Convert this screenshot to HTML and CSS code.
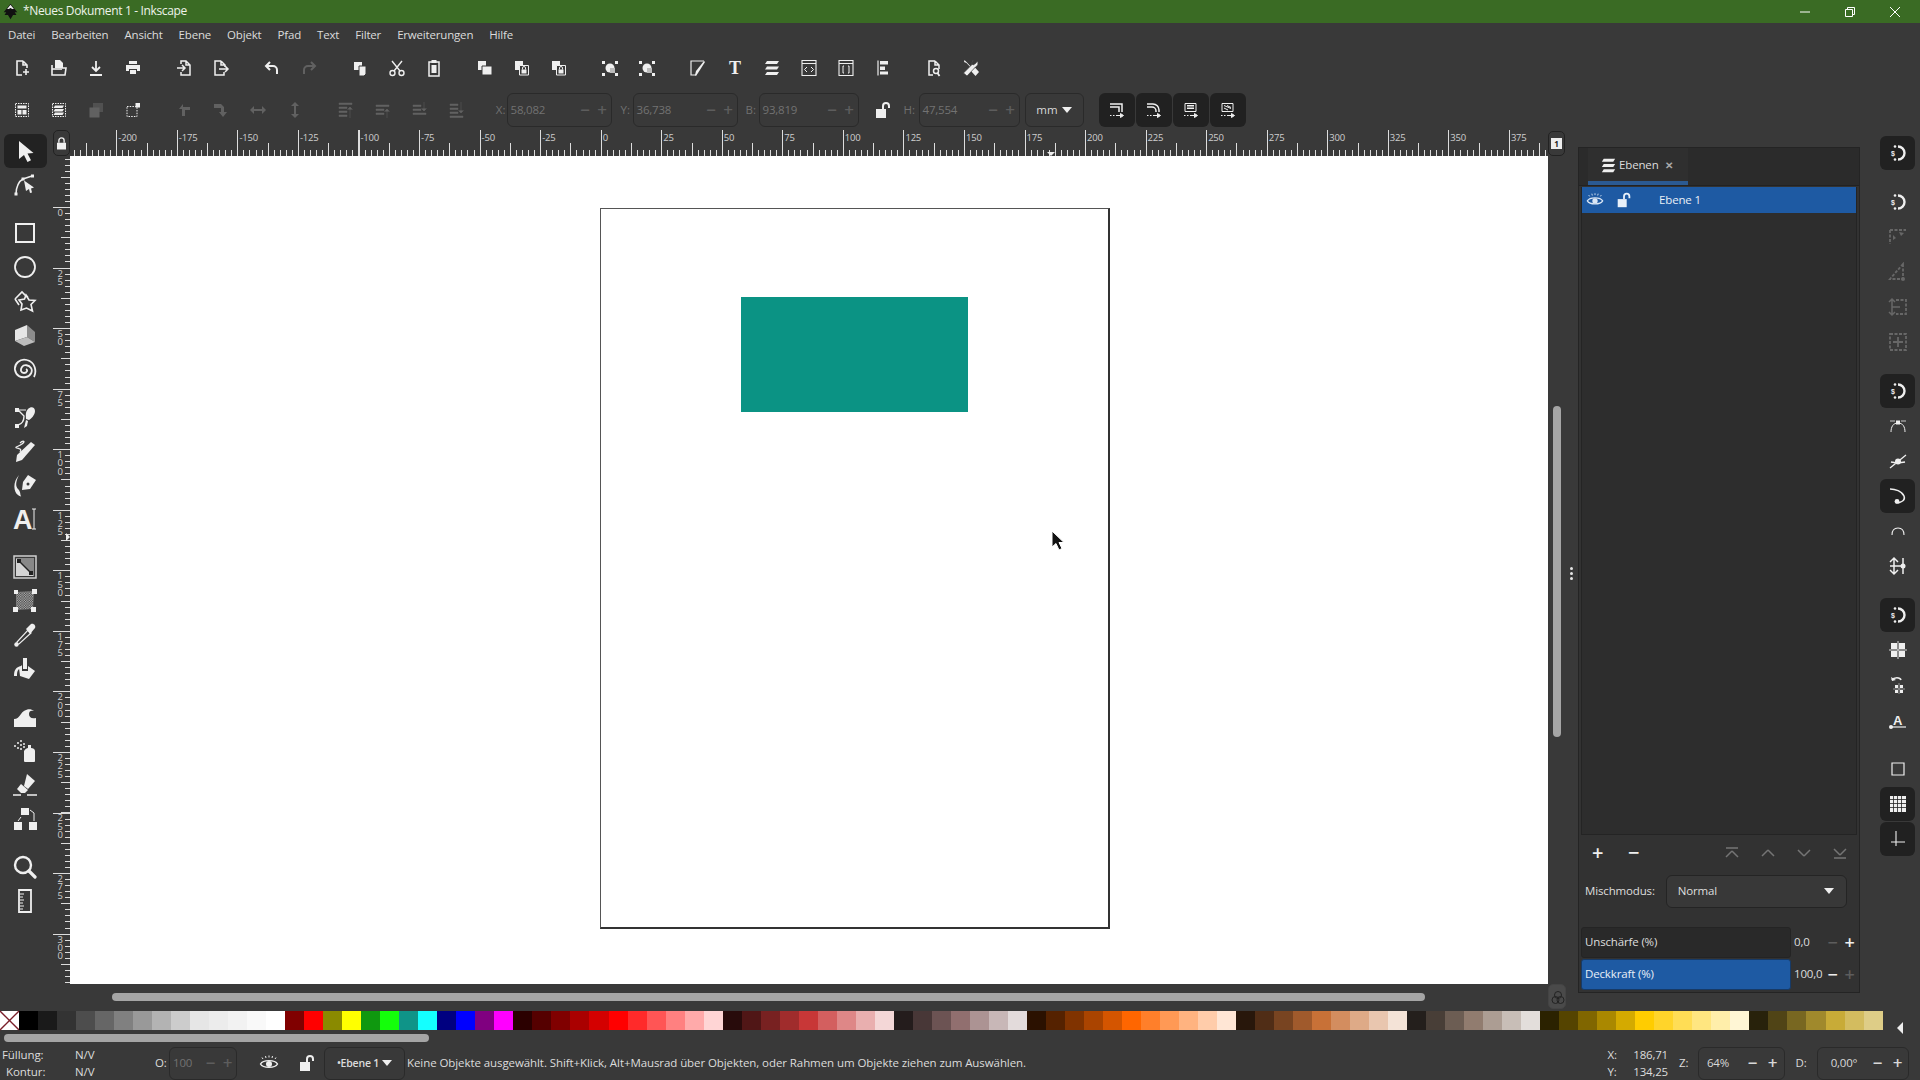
FILE: index.html
```html
<!DOCTYPE html>
<html lang="de">
<head>
<meta charset="utf-8">
<title>*Neues Dokument 1 - Inkscape</title>
<link rel="stylesheet" href="styles.css">
</head>
<body>
<svg class="sprite" xmlns="http://www.w3.org/2000/svg">
<defs>
<symbol id="new" viewBox="0 0 20 20"><path d="M11 3H5v14h5M11 3l4 4v3M11 3v4h4" fill="none" stroke="currentColor" stroke-width="1.6"/><path d="M14 11v6M11 14h6" fill="none" stroke="currentColor" stroke-width="1.6"/></symbol>
<symbol id="open" viewBox="0 0 20 20"><path d="M6 2h5l3 3v5H6z" fill="currentColor"/><path d="M3 7v10h13l1-7h-4" fill="none" stroke="currentColor" stroke-width="1.6"/><path d="M3 11h10" stroke="currentColor" stroke-width="1.6"/></symbol>
<symbol id="save" viewBox="0 0 20 20"><path d="M10 3v9M6 9l4 4 4-4M4 17h12" fill="none" stroke="currentColor" stroke-width="1.8"/></symbol>
<symbol id="print" viewBox="0 0 20 20"><path d="M6 3h8v3H6zM3 7h14v6h-3v-2H6v2H3zM7 12h6v4H7z" fill="currentColor"/></symbol>
<symbol id="import" viewBox="0 0 20 20"><path d="M7 6V3h5l4 4v10H7v-3M12 3v4h4" fill="none" stroke="currentColor" stroke-width="1.5"/><path d="M3 10h7M8 7l3 3-3 3" fill="none" stroke="currentColor" stroke-width="1.5"/></symbol>
<symbol id="export" viewBox="0 0 20 20"><path d="M10 3H4v14h9v-3M10 3l4 4v2M10 3v4h4" fill="none" stroke="currentColor" stroke-width="1.5"/><path d="M8 11h9M14 8l3 3-3 3" fill="none" stroke="currentColor" stroke-width="1.5"/></symbol>
<symbol id="undo" viewBox="0 0 20 20"><path d="M8 4L4 8l4 4" fill="none" stroke="currentColor" stroke-width="2"/><path d="M4 8h7a4 4 0 0 1 4 4v4" fill="none" stroke="currentColor" stroke-width="2"/></symbol>
<symbol id="redo" viewBox="0 0 20 20"><path d="M12 4l4 4-4 4" fill="none" stroke="currentColor" stroke-width="2"/><path d="M16 8H9a4 4 0 0 0-4 4v4" fill="none" stroke="currentColor" stroke-width="2"/></symbol>
<symbol id="copy" viewBox="0 0 20 20"><path d="M4 4h8v8H4z" fill="currentColor"/><path d="M9 8h7v8l-2 2H9z" fill="currentColor" stroke="#393939"/></symbol>
<symbol id="cut" viewBox="0 0 20 20"><path d="M5 3l8 10M15 3L7 13" fill="none" stroke="currentColor" stroke-width="1.4"/><circle cx="5.5" cy="15" r="2.5" fill="none" stroke="currentColor" stroke-width="1.4"/><circle cx="14.500" cy="15" r="2.5" fill="none" stroke="currentColor" stroke-width="1.4"/></symbol>
<symbol id="paste" viewBox="0 0 20 20"><path d="M5 4h10v14H5z" fill="none" stroke="currentColor" stroke-width="1.5"/><path d="M7.500 2h5v3h-5zM7.500 7h5v8h-5z" fill="currentColor"/></symbol>
<symbol id="stack1" viewBox="0 0 20 20"><path d="M3 3h8v9H3z" fill="currentColor"/><path d="M7 8h10v9H7z" fill="currentColor" stroke="#393939"/></symbol>
<symbol id="stack2" viewBox="0 0 20 20"><path d="M3 3h8v9H3z" fill="currentColor"/><path d="M7.500 7.500h9v9.500h-9z" fill="#393939" stroke="currentColor"/><path d="M9.500 11.500h5v4h-5z" fill="currentColor"/><path d="M10.500 11.500v-1.500a1.500 1.500 0 0 1 3 0v1.500" fill="none" stroke="currentColor"/></symbol>
<symbol id="zsel" viewBox="0 0 20 20"><path d="M2 3h3v3H2zM15 3h3v3h-3zM2 15h3v3H2zM15 15h3v3h-3z" fill="currentColor"/><circle cx="10" cy="10" r="4.500" fill="currentColor"/><path d="M10 10h5v5h-5z" fill="#bbb"/></symbol>
<symbol id="fillstroke" viewBox="0 0 20 20"><path d="M16 3H3v14h5" fill="none" stroke="currentColor" stroke-width="1.200"/><path d="M16 3l1 1-7 11-2 3-1-1 1-4z" fill="currentColor"/></symbol>
<symbol id="layers" viewBox="0 0 20 20"><path d="M5 3h12l-2 3H3zM5 8.500h12l-2 3H3zM5 14h12l-2 3H3z" fill="currentColor"/></symbol>
<symbol id="xml" viewBox="0 0 20 20"><path d="M3 2.500h14v15H3zM3 5.500h14" fill="none" stroke="currentColor" stroke-width="1.100"/><path d="M8 9l-2.500 2.500L8 14M12 9l2.500 2.500L12 14" fill="none" stroke="currentColor" stroke-width="1"/></symbol>
<symbol id="css" viewBox="0 0 20 20"><path d="M3 2.500h14v15H3zM3 5.500h14" fill="none" stroke="currentColor" stroke-width="1.100"/><path d="M8 8H7v7h1M12 8h1v7h-1" fill="none" stroke="currentColor"/></symbol>
<symbol id="align" viewBox="0 0 20 20"><path d="M5 2.500v15" stroke="currentColor" stroke-width="1.200"/><path d="M7 3h8v3.500H7zM7 8.500h5V12H7zM7 13.500h8v3H7z" fill="currentColor"/></symbol>
<symbol id="docprop" viewBox="0 0 20 20"><path d="M11 3H5v14h4M11 3l4 4v4M11 3v4h4" fill="none" stroke="currentColor" stroke-width="1.500"/><circle cx="12" cy="13" r="2.500" fill="none" stroke="currentColor" stroke-width="1.500"/><path d="M13.500 15l2 3" stroke="currentColor" stroke-width="1.800"/></symbol>
<symbol id="prefs" viewBox="0 0 20 20"><path d="M3.500 2L6 4.500l6 6.500 2-1.500 4 4.500-3.500 4-4.500-5 1.500-1.500-6-6.500-2.500-1z" fill="currentColor"/><path d="M12.500 2.500L10.500 5l1.500 2 2.500-1.500L16.500 3c1 2.500.5 5-2 6L6 18l-3.500-3L11 6.500c-.5-2 0-3.500 1.500-4z" fill="currentColor" stroke="#393939" stroke-width=".7"/></symbol>
<symbol id="selall" viewBox="0 0 20 20"><path d="M3.500 3.500h13v13h-13z" fill="none" stroke="currentColor" stroke-dasharray="1.500 1"/><path d="M5.500 5.500h9v3h-9zM5.500 10h4v4.500h-4zM10.500 10h4v4.500h-4z" fill="currentColor"/></symbol>
<symbol id="sellayers" viewBox="0 0 20 20"><path d="M3.500 3.500h13v13h-13z" fill="none" stroke="currentColor" stroke-dasharray="1.500 1"/><path d="M6 5.500h9l-1.500 2.500h-9zM6 9h9l-1.500 2.500h-9zM6 12.500h9L13.500 15h-9z" fill="currentColor"/></symbol>
<symbol id="selinv" viewBox="0 0 20 20"><path d="M3.500 7.500h10v10h-10z" fill="currentColor"/><path d="M7 3h10v9H7z" fill="currentColor" opacity=".6"/></symbol>
<symbol id="sel2" viewBox="0 0 20 20"><path d="M4 6.500h10v10H4z" fill="none" stroke="currentColor" stroke-dasharray="1.500 1.200"/><path d="M12.500 3h4.500v4.500h-4.500z" fill="currentColor"/></symbol>
<symbol id="rotl" viewBox="0 0 20 20"><path d="M9 4L5 9h3v7h3v-6h5V7H9z" fill="currentColor"/></symbol>
<symbol id="rotr" viewBox="0 0 20 20"><path d="M3 4h7l3 3v5h3l-4 5-4-5h2V8H3z" fill="currentColor"/></symbol>
<symbol id="fliph" viewBox="0 0 20 20"><path d="M2 10l4-4v3h8V6l4 4-4 4v-3H6v3z" fill="currentColor"/></symbol>
<symbol id="flipv" viewBox="0 0 20 20"><path d="M10 2l4 4h-3v8h3l-4 4-4-4h3V6H6z" fill="currentColor"/></symbol>
<symbol id="ztop" viewBox="0 0 20 20"><path d="M3 3h13v1.500H3zM3 7h8v1.500H3zM3 11h8v1.500H3zM3 15h8v1.500H3zM14 18V7M11.500 9.500L14 7l2.500 2.500" fill="currentColor" stroke="currentColor" stroke-width=".5"/></symbol>
<symbol id="zup" viewBox="0 0 20 20"><path d="M3 5h13v1.500H3zM3 9h8v1.500H3zM3 13h8v1.500H3zM14 18V9M11.500 11.500L14 9l2.500 2.500" fill="currentColor" stroke="currentColor" stroke-width=".5"/></symbol>
<symbol id="zdn" viewBox="0 0 20 20"><path d="M3 5h8v1.500H3zM3 9h8v1.500H3zM3 13h13v1.500H3zM14 2v9M11.500 8.500L14 11l2.500-2.500" fill="currentColor" stroke="currentColor" stroke-width=".5"/></symbol>
<symbol id="zbot" viewBox="0 0 20 20"><path d="M3 4h8v1.500H3zM3 8h8v1.500H3zM3 12h8v1.500H3zM3 16h13v1.500H3zM14 2v11M11.500 10.500L14 13l2.500-2.500" fill="currentColor" stroke="currentColor" stroke-width=".5"/></symbol>
<symbol id="tr1" viewBox="0 0 20 20"><path d="M3 4h12v8M3 7h9v5" fill="none" stroke="currentColor" stroke-width="1.500"/><path d="M3 15.500h1.500M6 15.500h1.500M9 15.500h6M13.500 13.500l3 2-3 2z" fill="currentColor" stroke="currentColor"/></symbol>
<symbol id="tr2" viewBox="0 0 20 20"><path d="M3 4h6a6 6 0 0 1 6 6v2M3 7h5a4 4 0 0 1 4 4v1" fill="none" stroke="currentColor" stroke-width="1.500"/><path d="M3 15.500h1.500M6 15.500h1.500M9 15.500h6M13.500 13.500l3 2-3 2z" fill="currentColor" stroke="currentColor"/></symbol>
<symbol id="tr3" viewBox="0 0 20 20"><path d="M4 3.500h11v8H4z" fill="none" stroke="currentColor"/><path d="M6 5h7v1.500H6zM6 7.500h7V9H6z" fill="currentColor"/><path d="M3 15.500h1.500M6 15.500h1.500M9 15.500h6M13.500 13.500l3 2-3 2z" fill="currentColor" stroke="currentColor"/></symbol>
<symbol id="tr4" viewBox="0 0 20 20"><path d="M4 3.500h11v8H4z" fill="none" stroke="currentColor"/><path d="M6 5.500l7 3M6 8l4 2M9 5.500l4 2" fill="none" stroke="currentColor"/><path d="M3 15.500h1.500M6 15.500h1.500M9 15.500h6M13.500 13.500l3 2-3 2z" fill="currentColor" stroke="currentColor"/></symbol>
<symbol id="lockopen" viewBox="0 0 20 20"><path d="M3 9h10v9H3z" fill="currentColor"/><path d="M10 9V6a3 3 0 0 1 6 0v2" fill="none" stroke="currentColor" stroke-width="2"/></symbol>
<symbol id="lockshut" viewBox="0 0 20 20"><path d="M4 9h12v9H4z" fill="currentColor"/><path d="M6.500 9V6a3.500 3.500 0 0 1 7 0v3" fill="none" stroke="currentColor" stroke-width="1.800"/></symbol>
<symbol id="eye" viewBox="0 0 20 20"><path d="M1.500 11C4 6.500 16 6.500 18.500 11 16 15.500 4 15.500 1.500 11z" fill="none" stroke="currentColor" stroke-width="1.400"/><circle cx="10" cy="11" r="3" fill="currentColor"/><path d="M4 6L3 4.500M7 5l-.5-2M10 4.500V2.500M13 5l.5-2M16 6l1-1.500" stroke="currentColor"/></symbol>

<symbol id="t-select" viewBox="0 0 24 24"><path d="M6 2v18l5-4 3.500 7 3.500-1.800L14.500 14.500 20.500 14z" fill="currentColor"/></symbol>
<symbol id="t-node" viewBox="0 0 24 24"><path d="M3 21C3 14 6 8 10 6l9-3" fill="none" stroke="currentColor" stroke-width="1.500"/><path d="M1.500 19.500h3v3h-3zM8.500 4.500h3v3h-3zM18 1.500h3v3h-3z" fill="currentColor"/><path d="M11 7.500l10 7-3 1 1 4-2 .5-1-4-3 2z" fill="currentColor"/></symbol>
<symbol id="t-rect" viewBox="0 0 24 24"><path d="M3 3h18v18H3z" fill="none" stroke="currentColor" stroke-width="2"/></symbol>
<symbol id="t-ellipse" viewBox="0 0 24 24"><circle cx="12" cy="12" r="10" fill="none" stroke="currentColor" stroke-width="1.800"/></symbol>
<symbol id="t-star" viewBox="0 0 24 24"><path d="M2 10l7-7 4 4 2 1M6 16l-4-6" fill="none" stroke="currentColor" stroke-width="1.600"/><path d="M13 6l3 5 6 .5-4 4 1.500 6.500-6-3-5.500 2 1-6L6 11l5.500-1z" fill="none" stroke="currentColor" stroke-width="1.600"/></symbol>
<symbol id="t-box" viewBox="0 0 24 24"><path d="M2 7l12-5v12L2 18z" fill="#e6e6e6"/><path d="M14 2l8 7v10l-8-5z" fill="#8c8c8c"/><path d="M2 18l12-4 8 5-11 4z" fill="#bdbdbd"/></symbol>
<symbol id="t-spiral" viewBox="0 0 24 24"><path d="M21 20c3-6 1-15-7-17C7 1 1 7 2 13s6 8 11 7 7-6 5-9-7-4-9-1-1 6 2 6 4-3 2-4" fill="none" stroke="currentColor" stroke-width="1.800"/></symbol>
<symbol id="t-bezier" viewBox="0 0 24 24"><path d="M2 3h4v4H2zM2 19h4v4H2z" fill="currentColor"/><path d="M5 5l6 6c0 4-2 8-6 9" fill="none" stroke="currentColor" stroke-width="1.400"/><path d="M5 5h8" stroke="currentColor"/><path d="M15 4c3-3 7-2 7 2s-4 8-6 9l-3-1c0-3-1-7 2-10z" fill="currentColor"/><path d="M13 15l2 1-1 5-3 2z" fill="currentColor"/></symbol>
<symbol id="t-pencil" viewBox="0 0 24 24"><path d="M18 3l4 3L9 21l-6 2 1-7z" fill="currentColor"/><path d="M7 4c3-3 6-2 2 1S1 8 4 9s5 1 3 4" fill="none" stroke="currentColor" stroke-width="1.300"/></symbol>
<symbol id="t-calli" viewBox="0 0 24 24"><path d="M15 2l8 5-6 9-8 1 1-8z" fill="currentColor"/><path d="M6 2C3 8 2 13 5 16s2 6 3 7-2 0-3-1C1 19-1 10 6 2z" fill="currentColor"/><circle cx="15" cy="11" r="1.500" fill="#393939"/></symbol>
<symbol id="t-grad" viewBox="0 0 24 24"><path d="M1 1h22v22H1z" fill="#3a3a3a" stroke="#cfcfcf" stroke-width="1.500"/><path d="M3 3h18v18z" fill="#888"/><path d="M3 3v18h18z" fill="#d5d5d5"/><path d="M6 6l12 12" stroke="#222" stroke-width="1.400"/><path d="M4 4h4v4H4zM16 16h4v4h-4z" fill="#222"/></symbol>
<symbol id="t-mesh" viewBox="0 0 24 24"><defs><pattern id="chk" width="2.400" height="2.400" patternUnits="userSpaceOnUse"><rect width="2.400" height="2.400" fill="#3a3a3a"/><rect width="1.200" height="1.200" fill="#bbb"/><rect x="1.200" y="1.200" width="1.200" height="1.200" fill="#bbb"/></pattern></defs><path d="M3 3l18-1-1 18-17 1z" fill="url(#chk)"/><path d="M1 1h4v4H1zM19 0h5v5h-5zM0 18h5v5H0zM18 18h5v5h-5z" fill="currentColor"/></symbol>
<symbol id="t-dropper" viewBox="0 0 24 24"><path d="M15 7l3 3-12 11-2 0 0-2z" fill="none" stroke="currentColor" stroke-width="1.200"/><path d="M13 6l5-5c3-1 5 2 4 4l-5 6z" fill="currentColor"/><circle cx="3.500" cy="21.500" r="2.200" fill="currentColor"/></symbol>
<symbol id="t-bucket" viewBox="0 0 24 24"><path d="M10 1h4v11h-4z" fill="currentColor"/><path d="M9 8v6h6V9l7 5-6 8-9-3-1-8zM1 19c0-6 2-9 7-10v2c-3 1-4 3-4 8z" fill="currentColor"/></symbol>
<symbol id="t-tweak" viewBox="0 0 24 24"><path d="M1 22v-8c3 0 5-2 7-5s8-7 13-3c-3-1-5 0-5 3s2 5 7 4v9z" fill="currentColor"/></symbol>
<symbol id="t-spray" viewBox="0 0 24 24"><path d="M11 12c1-2 3-3 4-3V6h3v3c2 0 4 1 4 3v10c0 1-1 1-1 1H12c-1 0-1-1-1-1z" fill="currentColor"/><g fill="currentColor"><circle cx="2" cy="7" r="1"/><circle cx="5" cy="4" r="1"/><circle cx="8" cy="2" r="1"/><circle cx="8" cy="6" r="1"/><circle cx="5" cy="9" r="1"/><circle cx="8" cy="10" r="1"/><circle cx="11" cy="5" r="1"/><circle cx="11" cy="8" r="1"/></g></symbol>
<symbol id="t-eraser" viewBox="0 0 24 24"><path d="M14 1l8 7-7 8-4-3z" fill="currentColor"/><path d="M8 11l7 6-3 3H8l-4-4z" fill="currentColor"/><path d="M0 22h8M14 22h10" stroke="currentColor" stroke-width="1.500"/></symbol>
<symbol id="t-conn" viewBox="0 0 24 24"><path d="M8 1h8v7H8zM1 15h8v8H1zM16 15h8v8h-8z" fill="currentColor"/><path d="M8 10l-3 4M17 3l4 3v8" fill="none" stroke="currentColor"/></symbol>
<symbol id="t-zoom" viewBox="0 0 24 24"><circle cx="10" cy="10" r="8" fill="none" stroke="currentColor" stroke-width="2.400"/><path d="M16 16l6 6" stroke="currentColor" stroke-width="3.200" stroke-linecap="round"/></symbol>
<symbol id="t-measure" viewBox="0 0 24 24"><path d="M6 1h12v22H6z" fill="none" stroke="currentColor" stroke-width="1.800"/><path d="M7 5h4M7 8h3M7 11h4M7 14h3M7 17h4M7 20h3" stroke="currentColor"/></symbol>

<symbol id="magnet" viewBox="0 0 20 20"><path d="M10 3.500a6.500 6.500 0 0 1 0 13" fill="none" stroke="currentColor" stroke-width="2.400"/><circle cx="7" cy="3.500" r="1.300" fill="currentColor"/><circle cx="7" cy="16.500" r="1.300" fill="currentColor"/><text x="3" y="12.500" class="icontext">$</text></symbol>
<symbol id="s-bbox" viewBox="0 0 20 20"><path d="M2 3h16M2 3v14" fill="none" stroke="currentColor" stroke-width="1.800" stroke-dasharray="3 1.500"/><path d="M11 5l5 1-3 3zM5 8v5l3-2z" fill="currentColor"/></symbol>
<symbol id="s-tri" viewBox="0 0 20 20"><path d="M15 2v15H2z" fill="none" stroke="currentColor" stroke-width="1.800" stroke-dasharray="3 1.500"/><circle cx="15" cy="17" r="2" fill="currentColor"/></symbol>
<symbol id="s-mid" viewBox="0 0 20 20"><path d="M8 3h10v14H8" fill="none" stroke="currentColor" stroke-width="1.800" stroke-dasharray="3 1.500"/><path d="M4 2v16M1 5l3-3 3 3M1 15l3 3 3-3M4 10h8" fill="none" stroke="currentColor" stroke-width="1.500"/></symbol>
<symbol id="s-center" viewBox="0 0 20 20"><path d="M2 2h16v16H2z" fill="none" stroke="currentColor" stroke-width="1.800" stroke-dasharray="3 1.500"/><path d="M10 5v10M5 10h10" stroke="currentColor" stroke-width="1.800"/></symbol>
<symbol id="s-cusp" viewBox="0 0 20 20"><path d="M3 16c0-5 2-9 7-9s7 4 7 9" fill="none" stroke="currentColor" stroke-width="1"/><path d="M8 4.500h4v4H8z" fill="currentColor"/><path d="M2 5h5M13 5h5" stroke="currentColor" stroke-width=".8"/></symbol>
<symbol id="s-smooth" viewBox="0 0 20 20"><path d="M2 17L18 4M3 11c4 1 9 1 14 0" fill="none" stroke="currentColor" stroke-width="1.300"/><circle cx="10" cy="10.500" r="3" fill="currentColor"/></symbol>
<symbol id="s-path" viewBox="0 0 20 20"><path d="M2 3c5 0 12 2 14 7s-4 6-6 7" fill="none" stroke="currentColor" stroke-width="1.500"/><circle cx="9" cy="15.500" r="2.400" fill="currentColor"/></symbol>
<symbol id="s-arc" viewBox="0 0 20 20"><path d="M4 14C4 9 6 7 10 7s6 2 6 7" fill="none" stroke="currentColor" stroke-width="1.100"/></symbol>
<symbol id="s-dist" viewBox="0 0 20 20"><path d="M6 2v16M2 6l4-4 4 4M2 14l4 4 4-4M2 10h11" fill="none" stroke="currentColor" stroke-width="1.500"/><path d="M15 2v16" stroke="currentColor" stroke-width="1.500"/><circle cx="15" cy="10" r="2.500" fill="currentColor"/></symbol>
<symbol id="s-cross" viewBox="0 0 20 20"><path d="M3 3h6v6H3zM11 3h6v6h-6zM3 11h6v6H3zM11 11h6v6h-6z" fill="currentColor"/><path d="M10 1v18M1 10h18" stroke="#dcdcdc"/></symbol>
<symbol id="s-rotc" viewBox="0 0 20 20"><path d="M4 5c2-3 8-3 9 0" fill="none" stroke="currentColor" stroke-width="1.600"/><path d="M3 2l1 4 4-1z" fill="currentColor"/><path d="M7 10h3v3H7zM12 10h3v3h-3zM7 15h3v3H7zM12 15h3v3h-3z" fill="currentColor"/><path d="M11 8v11M5 14h12" stroke="#bbb" stroke-width=".7"/></symbol>
<symbol id="s-text" viewBox="0 0 20 20"><text x="5" y="15" class="iconbold">A</text><path d="M2 17h16" stroke="currentColor" stroke-width="1.200"/><circle cx="3" cy="17" r="2" fill="currentColor"/></symbol>
<symbol id="s-page" viewBox="0 0 20 20"><path d="M4 4h12v12H4z" fill="none" stroke="currentColor" stroke-width="1.200"/></symbol>
<symbol id="s-grid" viewBox="0 0 20 20"><path d="M2 2h16v16H2z" fill="currentColor"/><path d="M5.500 2v16M9.500 2v16M13.500 2v16M2 5.500h16M2 9.500h16M2 13.500h16" stroke="#222" stroke-width=".8"/></symbol>
<symbol id="s-guide" viewBox="0 0 20 20"><path d="M8 2v15M3 13h14" stroke="currentColor" stroke-width="1.100"/></symbol>
</defs>
</svg>

<header class="titlebar">
  <svg class="logo" viewBox="0 0 20 20"><path d="M10 1l8 10-3 0 2 3-4 0-3 5-3-5-4 0 2-3-3 0z" fill="#111"/><path d="M10 2l4 5-2 0-2-1-2 1-2 0z" fill="#eee"/></svg>
  <span class="title">*Neues Dokument 1 - Inkscape</span>
  <div class="winctl">
    <span class="wbtn"><svg viewBox="0 0 12 12"><path d="M1 6h10" stroke="#fff"/></svg></span>
    <span class="wbtn"><svg viewBox="0 0 12 12"><path d="M1.500 3.500h7v7h-7zM3.500 3.500v-2h7v7h-2" fill="none" stroke="#fff"/></svg></span>
    <span class="wbtn"><svg viewBox="0 0 12 12"><path d="M1 1l10 10M11 1L1 11" stroke="#fff"/></svg></span>
  </div>
</header>

<nav class="menubar">
  <span>Datei</span><span>Bearbeiten</span><span>Ansicht</span><span>Ebene</span><span>Objekt</span><span>Pfad</span><span>Text</span><span>Filter</span><span>Erweiterungen</span><span>Hilfe</span>
</nav>

<div class="toolbar tb1">
  <div class="grp"><span class="tb"><svg><use href="#new"/></svg></span><span class="tb"><svg><use href="#open"/></svg></span><span class="tb"><svg><use href="#save"/></svg></span><span class="tb"><svg><use href="#print"/></svg></span></div>
  <div class="grp"><span class="tb"><svg><use href="#import"/></svg></span><span class="tb"><svg><use href="#export"/></svg></span></div>
  <div class="grp"><span class="tb"><svg><use href="#undo"/></svg></span><span class="tb off"><svg><use href="#redo"/></svg></span></div>
  <div class="grp"><span class="tb"><svg><use href="#copy"/></svg></span><span class="tb"><svg><use href="#cut"/></svg></span><span class="tb"><svg><use href="#paste"/></svg></span></div>
  <div class="grp"><span class="tb"><svg><use href="#stack1"/></svg></span><span class="tb"><svg><use href="#stack2"/></svg></span><span class="tb"><svg><use href="#stack2"/></svg></span></div>
  <div class="grp"><span class="tb"><svg><use href="#zsel"/></svg></span><span class="tb"><svg><use href="#zsel"/></svg></span></div>
  <div class="grp"><span class="tb"><svg><use href="#fillstroke"/></svg></span><span class="tb"><svg viewBox="0 0 20 20"><text x="10" y="16" class="icontee">T</text></svg></span><span class="tb"><svg><use href="#layers"/></svg></span><span class="tb"><svg><use href="#xml"/></svg></span><span class="tb"><svg><use href="#css"/></svg></span><span class="tb"><svg><use href="#align"/></svg></span></div>
  <div class="grp"><span class="tb"><svg><use href="#docprop"/></svg></span><span class="tb"><svg><use href="#prefs"/></svg></span></div>
</div>

<div class="toolbar tb2">
  <div class="grp"><span class="tb"><svg><use href="#selall"/></svg></span><span class="tb"><svg><use href="#sellayers"/></svg></span><span class="tb off"><svg><use href="#selinv"/></svg></span><span class="tb"><svg><use href="#sel2"/></svg></span></div>
  <div class="grp"><span class="tb off"><svg><use href="#rotl"/></svg></span><span class="tb off"><svg><use href="#rotr"/></svg></span><span class="tb off"><svg><use href="#fliph"/></svg></span><span class="tb off"><svg><use href="#flipv"/></svg></span></div>
  <div class="grp"><span class="tb off"><svg><use href="#ztop"/></svg></span><span class="tb off"><svg><use href="#zup"/></svg></span><span class="tb off"><svg><use href="#zdn"/></svg></span><span class="tb off"><svg><use href="#zbot"/></svg></span></div>
  <span class="fl fl-x">X:</span><div class="spin sw-x"><span class="val">58,082</span><span class="pm">−</span><span class="pm">+</span></div>
  <span class="fl fl-y">Y:</span><div class="spin sw-y"><span class="val">36,738</span><span class="pm">−</span><span class="pm">+</span></div>
  <span class="fl fl-b">B:</span><div class="spin sw-b"><span class="val">93,819</span><span class="pm">−</span><span class="pm">+</span></div>
  <span class="lockbtn"><svg><use href="#lockopen"/></svg></span>
  <span class="fl fl-h">H:</span><div class="spin sw-h"><span class="val">47,554</span><span class="pm">−</span><span class="pm">+</span></div>
  <div class="unit"><span>mm</span><i class="caret"></i></div>
  <div class="trgrp"><span class="tr"><svg><use href="#tr1"/></svg></span><span class="tr"><svg><use href="#tr2"/></svg></span><span class="tr"><svg><use href="#tr3"/></svg></span><span class="tr"><svg><use href="#tr4"/></svg></span></div>
</div>

<main class="main">
  <aside class="tools">
    <div class="tgrp"><span class="tool on"><svg><use href="#t-select"/></svg></span><span class="tool"><svg><use href="#t-node"/></svg></span></div>
    <div class="tgrp"><span class="tool"><svg><use href="#t-rect"/></svg></span><span class="tool"><svg><use href="#t-ellipse"/></svg></span><span class="tool"><svg><use href="#t-star"/></svg></span><span class="tool"><svg><use href="#t-box"/></svg></span><span class="tool"><svg><use href="#t-spiral"/></svg></span></div>
    <div class="tgrp"><span class="tool"><svg><use href="#t-bezier"/></svg></span><span class="tool"><svg><use href="#t-pencil"/></svg></span><span class="tool"><svg><use href="#t-calli"/></svg></span><span class="tool"><svg viewBox="0 0 24 24"><text x="0" y="22" class="icona">A</text><path d="M19 2h4M21 2v20M19 22h4" stroke="currentColor" fill="none"/></svg></span></div>
    <div class="tgrp"><span class="tool"><svg><use href="#t-grad"/></svg></span><span class="tool"><svg><use href="#t-mesh"/></svg></span><span class="tool"><svg><use href="#t-dropper"/></svg></span><span class="tool"><svg><use href="#t-bucket"/></svg></span></div>
    <div class="tgrp"><span class="tool"><svg><use href="#t-tweak"/></svg></span><span class="tool"><svg><use href="#t-spray"/></svg></span><span class="tool"><svg><use href="#t-eraser"/></svg></span><span class="tool"><svg><use href="#t-conn"/></svg></span></div>
    <div class="tgrp"><span class="tool"><svg><use href="#t-zoom"/></svg></span><span class="tool"><svg><use href="#t-measure"/></svg></span></div>
  </aside>

  <section class="workspace">
    <div class="corner"><span class="lockcorner"><svg><use href="#lockshut"/></svg></span></div>
    <div class="hruler"><span>-200</span><span>-175</span><span>-150</span><span>-125</span><span>-100</span><span>-75</span><span>-50</span><span>-25</span><span>0</span><span>25</span><span>50</span><span>75</span><span>100</span><span>125</span><span>150</span><span>175</span><span>200</span><span>225</span><span>250</span><span>275</span><span>300</span><span>325</span><span>350</span><span>375</span><i class="mark-h"></i></div>
    <div class="corner2"><span class="badge">1</span></div>
    <div class="vruler"><span>0</span><span>25</span><span>50</span><span>75</span><span>100</span><span>125</span><span>150</span><span>175</span><span>200</span><span>225</span><span>250</span><span>275</span><span>300</span><i class="mark-v"></i></div>
    <div class="canvas">
      <div class="page"><div class="rect"></div></div>
      <svg class="cursor" viewBox="0 0 14 22"><path d="M1 1v16l4-3.500 3 6.500 3-1.500-3-6h5z" fill="#111" stroke="#fff"/></svg>
    </div>
    <div class="vscroll"><div class="vthumb"></div></div>
    <div class="hscroll"><div class="hthumb"></div></div>
    <div class="modes"><svg viewBox="0 0 18 25"><g fill="none" stroke="#222"><circle cx="9" cy="10" r="3.500"/><circle cx="6.500" cy="15" r="3.500"/><circle cx="11.500" cy="15" r="3.500"/></g></svg></div>
  </section>

  <section class="panelcol">
    <div class="handle"><i></i><i></i><i></i></div>
    <div class="panel">
      <div class="tabs"><div class="tab"><svg><use href="#layers"/></svg><span>Ebenen</span><b class="x">✕</b></div></div>
      <div class="list">
        <div class="row"><svg class="roweye"><use href="#eye"/></svg><svg class="rowlock"><use href="#lockopen"/></svg><span>Ebene 1</span></div>
      </div>
      <div class="lbtns">
        <span class="lb">+</span><span class="lb">−</span>
        <span class="lspace"></span>
        <svg class="lic"><path d="M3 2h12M9 5L3 11M9 5l6 6" fill="none" stroke="currentColor" stroke-width="1.500"/></svg>
        <svg class="lic"><path d="M9 4L3 10M9 4l6 6" fill="none" stroke="currentColor" stroke-width="1.500"/></svg>
        <svg class="lic"><path d="M9 10L3 4M9 10l6-6" fill="none" stroke="currentColor" stroke-width="1.500"/></svg>
        <svg class="lic"><path d="M3 12h12M9 9L3 3M9 9l6-6" fill="none" stroke="currentColor" stroke-width="1.500"/></svg>
      </div>
      <div class="blend"><span>Mischmodus:</span><div class="combo"><span>Normal</span><i class="caret"></i></div></div>
      <div class="sl"><div class="slbar">Unschärfe (%)</div><span class="slval">0,0</span><span class="pmx dim">−</span><span class="pmx">+</span></div>
      <div class="sl"><div class="slbar full">Deckkraft (%)</div><span class="slval">100,0</span><span class="pmx">−</span><span class="pmx dim">+</span></div>
    </div>
  </section>

  <aside class="snaps">
    <div class="sgrp"><span class="snap on"><svg><use href="#magnet"/></svg></span></div>
    <div class="sgrp"><span class="snap"><svg><use href="#magnet"/></svg></span><span class="snap off"><svg><use href="#s-bbox"/></svg></span><span class="snap off"><svg><use href="#s-tri"/></svg></span><span class="snap off"><svg><use href="#s-mid"/></svg></span><span class="snap off"><svg><use href="#s-center"/></svg></span></div>
    <div class="sgrp"><span class="snap on"><svg><use href="#magnet"/></svg></span><span class="snap"><svg><use href="#s-cusp"/></svg></span><span class="snap"><svg><use href="#s-smooth"/></svg></span><span class="snap on"><svg><use href="#s-path"/></svg></span><span class="snap"><svg><use href="#s-arc"/></svg></span><span class="snap"><svg><use href="#s-dist"/></svg></span></div>
    <div class="sgrp"><span class="snap on"><svg><use href="#magnet"/></svg></span><span class="snap"><svg><use href="#s-cross"/></svg></span><span class="snap"><svg><use href="#s-rotc"/></svg></span><span class="snap"><svg><use href="#s-text"/></svg></span></div>
    <div class="sgrp"><span class="snap"><svg><use href="#s-page"/></svg></span><span class="snap on"><svg><use href="#s-grid"/></svg></span><span class="snap on"><svg><use href="#s-guide"/></svg></span></div>
  </aside>
</main>

<div class="palette">
  <div class="swrow">
    <div class="swatches">
      <i class="none"><svg viewBox="0 0 19 19" preserveAspectRatio="none"><path d="M0 0l19 19M19 0L0 19" stroke="#7a1f2a" stroke-width="1.400"/></svg></i>
      <i style="background:#000000"></i><i style="background:#1a1a1a"></i><i style="background:#333333"></i><i style="background:#4d4d4d"></i><i style="background:#666666"></i><i style="background:#808080"></i><i style="background:#999999"></i><i style="background:#b3b3b3"></i><i style="background:#cccccc"></i><i style="background:#e6e6e6"></i><i style="background:#ececec"></i><i style="background:#f2f2f2"></i><i style="background:#f9f9f9"></i><i style="background:#ffffff"></i>
      <i style="background:#800000"></i><i style="background:#ff0000"></i><i style="background:#8a8a00"></i><i style="background:#ffff00"></i><i style="background:#0f980f"></i><i style="background:#14ff0a"></i><i style="background:#0f9488"></i><i style="background:#14ffff"></i><i style="background:#000080"></i><i style="background:#0000ff"></i><i style="background:#800080"></i><i style="background:#ff00ff"></i>
      <i style="background:#2b0000"></i><i style="background:#550000"></i><i style="background:#800000"></i><i style="background:#aa0000"></i><i style="background:#d40000"></i><i style="background:#ff0000"></i><i style="background:#ff2a2a"></i><i style="background:#ff5555"></i><i style="background:#ff8080"></i><i style="background:#ffaaaa"></i><i style="background:#ffd5d5"></i>
      <i style="background:#280b0b"></i><i style="background:#501616"></i><i style="background:#782121"></i><i style="background:#a02c2c"></i><i style="background:#c83737"></i><i style="background:#d35f5f"></i><i style="background:#de8787"></i><i style="background:#e9afaf"></i><i style="background:#f4d7d7"></i>
      <i style="background:#241c1c"></i><i style="background:#483737"></i><i style="background:#6c5353"></i><i style="background:#916f6f"></i><i style="background:#ac9393"></i><i style="background:#c8b7b7"></i><i style="background:#e3dbdb"></i>
      <i style="background:#2b1100"></i><i style="background:#552200"></i><i style="background:#803300"></i><i style="background:#aa4400"></i><i style="background:#d45500"></i><i style="background:#ff6600"></i><i style="background:#ff7f2a"></i><i style="background:#ff9955"></i><i style="background:#ffb380"></i><i style="background:#ffccaa"></i><i style="background:#ffe6d5"></i>
      <i style="background:#28170b"></i><i style="background:#502d16"></i><i style="background:#784421"></i><i style="background:#a05a2c"></i><i style="background:#c87137"></i><i style="background:#d38d5f"></i><i style="background:#deaa87"></i><i style="background:#e9c6af"></i><i style="background:#f4e3d7"></i>
      <i style="background:#241f1c"></i><i style="background:#483e37"></i><i style="background:#6c5d53"></i><i style="background:#917c6f"></i><i style="background:#ac9d93"></i><i style="background:#c8beb7"></i><i style="background:#e3dedb"></i>
      <i style="background:#2b2200"></i><i style="background:#554400"></i><i style="background:#806600"></i><i style="background:#aa8800"></i><i style="background:#d4aa00"></i><i style="background:#ffcc00"></i><i style="background:#ffd42a"></i><i style="background:#ffdd55"></i><i style="background:#ffe680"></i><i style="background:#ffeeaa"></i><i style="background:#fff6d5"></i>
      <i style="background:#28220b"></i><i style="background:#504416"></i><i style="background:#786721"></i><i style="background:#a0892c"></i><i style="background:#c8ab37"></i><i style="background:#d3bc5f"></i><i style="background:#decd87"></i>
    </div>
    <span class="palarrow"></span>
  </div>
  <div class="palthumb"></div>
</div>

<footer class="status">
  <div class="fs"><span class="fsl">Füllung:</span><span>N/V</span><span class="fsl k">Kontur:</span><span>N/V</span></div>
  <span class="ol">O:</span>
  <div class="spin sw-o"><span class="val">100</span><span class="pm">−</span><span class="pm">+</span></div>
  <svg class="seye"><use href="#eye"/></svg>
  <svg class="slock"><use href="#lockopen"/></svg>
  <div class="lcombo"><span>•Ebene 1</span><i class="caret"></i></div>
  <span class="msg">Keine Objekte ausgewählt. Shift+Klick, Alt+Mausrad über Objekten, oder Rahmen um Objekte ziehen zum Auswählen.</span>
  <div class="xy"><span>X:</span><span class="xyv">186,71</span><span>Y:</span><span class="xyv">134,25</span></div>
  <span class="zl">Z:</span>
  <div class="spin sw-z"><span class="val lit">64%</span><span class="pm lit">−</span><span class="pm lit">+</span></div>
  <span class="zl">D:</span>
  <div class="spin sw-d"><span class="val lit">0,00°</span><span class="pm lit">−</span><span class="pm lit">+</span></div>
</footer>
</body>
</html>
```

FILE: styles.css
```css
* { box-sizing: border-box; }
html, body { margin: 0; padding: 0; }
body {
  width: 1920px; height: 1080px; overflow: hidden;
  background: #393939; color: #dedede;
  font: 12px/1.2 "Open Sans", "Liberation Sans", sans-serif;
  display: flex; flex-direction: column;
}
.sprite { position: absolute; width: 0; height: 0; }
svg { display: block; color: #efefef; overflow: visible; }
.icontext { font: bold 7px "Liberation Sans", sans-serif; fill: currentColor; }
.iconbold { font: bold 13px "Liberation Sans", sans-serif; fill: currentColor; }
.icontee { font: bold 18px "Liberation Serif", serif; fill: currentColor; text-anchor: middle; }
.icona { font: bold 27px "Liberation Sans", sans-serif; fill: currentColor; }

/* title bar */
.titlebar { height: 23px; flex: none; background: #3a6b24; display: flex; align-items: center; color: #eef3ea; }
.logo { width: 17px; height: 17px; margin-left: 2px; }
.title { margin-left: 4px; font-size: 12px; letter-spacing: -.35px; }
.winctl { margin-left: auto; display: flex; padding-right: 3px; }
.wbtn { width: 45px; height: 23px; display: flex; align-items: center; justify-content: center; }
.wbtn svg { width: 12px; height: 12px; }

/* menu */
.menubar { height: 24px; flex: none; display: flex; align-items: center; gap: 16px; padding-left: 8px; font-size: 11.5px; color: #dcdcdc; letter-spacing: -.18px; }

/* toolbars */
.toolbar { flex: none; display: flex; align-items: center; padding-left: 3.5px; }
.tb1 { height: 43px; padding-bottom: 2px; }
.tb2 { height: 40px; }
.grp { display: flex; margin-right: 14px; }
.tb { width: 37px; height: 30px; display: flex; align-items: center; justify-content: center; }
.tb svg { width: 20px; height: 20px; }
.off { opacity: .22; }
.fl { color: #707070; font-size: 11.5px; }
.fl-x { width: 17px; text-align: right; padding-right: 1px; }
.fl-y { margin-left: 9px; width: 12px; }
.fl-b { margin-left: 8px; width: 13px; }
.fl-h { margin-left: 6px; width: 15px; }
.spin {
  height: 34px; display: flex; align-items: center; border: 1px solid #2a2a2a; border-radius: 6px;
  font-size: 11.5px; color: #727272; padding-left: 3px;
}
.val { flex: 1; letter-spacing: -.2px; }
.pm { width: 17px; text-align: center; font-size: 17px; color: #5d5d5d; line-height: 20px; font-weight: 600; }
.pm.lit { width: 20px; color: #d8d8d8; }
.lit { color: #d8d8d8; }
.spin .val.lit { text-align: center; }
.sw-x { width: 105px; }
.sw-y { width: 105px; }
.sw-b { width: 100px; }
.sw-h { width: 101px; }
.sw-o { width: 68px; height: 33px; }
.sw-z { width: 87px; height: 33px; margin-left: 6.5px; padding-right: 1px; }
.sw-z .val.lit { padding-right: 8px; }
.sw-d { width: 92px; height: 33px; margin-left: 9px; }
.lockbtn { width: 30px; margin-left: 9px; display: flex; justify-content: center; }
.lockbtn svg { width: 20px; height: 20px; }
.unit { width: 59px; height: 34px; margin-left: 5px; border: 1px solid #2a2a2a; border-radius: 6px; display: flex; align-items: center; justify-content: center; gap: 4px; color: #d8d8d8; font-size: 11.5px; }
.caret { display: inline-block; width: 0; height: 0; border: 5.5px solid transparent; border-top: 6px solid #efefef; border-bottom: 0; }
.trgrp { display: flex; gap: 1px; margin-left: 15px; }
.tr { width: 36px; height: 34px; background: #212121; border-radius: 6px; display: flex; align-items: center; justify-content: center; }
.tr svg { width: 20px; height: 20px; }

/* main grid */
.main { flex: none; height: 876px; display: grid; grid-template-columns: 53px 1513px 314px 40px; }

/* left tools */
.tools { padding: 4px 0 0 4px; display: flex; flex-direction: column; gap: 14px; }
.tgrp { display: flex; flex-direction: column; }
.tool { width: 43px; height: 34px; display: flex; align-items: center; justify-content: center; border-radius: 6px; padding-right: 1px; }
.tool svg { width: 24px; height: 24px; }
.tool.on { background: #222; }

/* workspace */
.workspace { display: grid; grid-template-columns: 17px 1478px 18px; grid-template-rows: 26px 828px 22px; }
.corner { display: flex; align-items: flex-start; }
.lockcorner { width: 18px; height: 26px; border: 1px solid #222; border-radius: 5px; display: flex; align-items: center; justify-content: center; }
.lockcorner svg { width: 15px; height: 17px; }
.hruler {
  position: relative; display: flex; overflow: hidden; padding-left: 48.3px; color: #cfcfcf; font-size: 9.5px; letter-spacing: -.2px; line-height: 1;
  background-image:
    repeating-linear-gradient(90deg, #ddd 46.3px, #ddd 47.3px, transparent 47.3px, transparent 106.85px),
    repeating-linear-gradient(90deg, #ddd 16px, #ddd 17px, transparent 17px, transparent 46.275px),
    repeating-linear-gradient(90deg, #ddd 3.9px, #ddd 4.9px, transparent 4.9px, transparent 9.955px);
  background-size: 100% 26px, 100% 13px, 100% 6px;
  background-repeat: no-repeat;
  background-position: 0 100%;
}
.hruler span { flex: 0 0 60.55px; padding-top: 3px; }
.mark-h { position: absolute; left: 977px; bottom: 0; width: 0; height: 0; border: 4px solid transparent; border-top: 4px solid #eee; border-bottom: 0; }
.corner2 { display: flex; padding-top: 1px; }
.badge { width: 17px; height: 25px; border: 1px solid #222; border-radius: 5px; position: relative; isolation: isolate; font-size: 8px; font-weight: 700; color: #222; display: flex; align-items: center; justify-content: center; }
.badge::before { content: ""; position: absolute; left: 2px; top: 6px; width: 11px; height: 11px; background: #eee; z-index: -1; }
.vruler {
  position: relative; overflow: hidden; padding-top: 53px; color: #cfcfcf; font-size: 9.5px; line-height: 8.3px;
  background-image:
    repeating-linear-gradient(180deg, #ddd 51px, #ddd 52px, transparent 52px, transparent 111.55px),
    repeating-linear-gradient(180deg, #ddd 20.7px, #ddd 21.7px, transparent 21.7px, transparent 50.975px),
    repeating-linear-gradient(180deg, #ddd 2.56px, #ddd 3.56px, transparent 3.56px, transparent 8.615px);
  background-size: 17px 100%, 9px 100%, 5px 100%;
  background-repeat: no-repeat;
  background-position: 100% 0;
}
.vruler span { display: block; height: 60.55px; width: 1ch; margin-left: 4.5px; word-break: break-all; }
.mark-v { position: absolute; right: 0; top: 377px; width: 0; height: 0; border: 4px solid transparent; border-left: 4px solid #eee; border-right: 0; }
.canvas { position: relative; background: #fff; overflow: hidden; }
.page { position: absolute; left: 530px; top: 52px; width: 510px; height: 721px; border: 1px solid #555; border-right: 2px solid #333; border-bottom: 2px solid #333; background: #fff; }
.rect { position: absolute; left: 140px; top: 88px; width: 227px; height: 115px; background: #0b9384; }
.cursor { position: absolute; left: 981px; top: 374px; width: 14px; height: 22px; }
.vthumb { width: 8px; height: 331px; margin: 250px 0 0 5px; background: #a5a5a5; border-radius: 4px; }
.hscroll { grid-column: 1 / 3; }
.hthumb { width: 1313px; height: 8px; margin: 9px 0 0 59px; background: #a5a5a5; border-radius: 4px; }
.modes { border: 1px solid #444; border-radius: 5px; background: #4a4a4a; height: 25px; width: 18px; }
.modes svg { width: 18px; height: 25px; }

/* layers panel */
.panelcol { position: relative; padding: 17px 0 0 12px; }
.handle { position: absolute; left: 4px; top: 437px; display: flex; flex-direction: column; gap: 2px; }
.handle i { width: 3px; height: 3px; background: #e5e5e5; border-radius: 50%; }
.panel { width: 282px; height: 846px; border: 1px solid #242424; background: #323232; display: flex; flex-direction: column; }
.tabs { height: 38px; flex: none; background: #2b2b2b; padding-left: 9px; border-bottom: 1px solid #222; }
.tab { width: 100px; height: 37px; background: #2f2f2f; border-bottom: 4px solid #2b5a92; display: flex; align-items: center; gap: 1px; padding: 1px 0 0 11px; font-size: 11.5px; letter-spacing: -.15px; color: #ddd; }
.tab svg { width: 19px; height: 19px; }
.tab .x { font-size: 10px; font-weight: 700; color: #aaa; margin-left: 5px; }
.list { height: 648px; flex: none; margin: 1px 2px 0; background: #2d2d2d; border: 1px solid #242424; border-top: 0; }
.row { height: 26px; background: #1e5aa3; display: flex; align-items: center; color: #eaf0f7; font-size: 11.5px; letter-spacing: -.15px; }
.roweye { width: 18px; height: 18px; margin-left: 4px; color: #d9e6f5; }
.rowlock { width: 18px; height: 18px; margin-left: 11px; color: #e9f1fa; }
.row span { margin-left: 26px; }
.lbtns { height: 36px; flex: none; display: flex; align-items: center; padding: 0 10px 0 9px; color: #eee; }
.lb { width: 36px; text-align: left; padding-left: 4px; font-size: 20px; font-weight: 600; line-height: 20px; }
.lspace { flex: 1; }
.lic { width: 18px; height: 14px; margin-left: 18px; color: #757575; }
.blend { height: 40px; flex: none; display: flex; align-items: center; padding-left: 6px; font-size: 11.5px; letter-spacing: -.15px; }
.combo { width: 181px; height: 33px; margin-left: 11px; border: 1px solid #242424; border-radius: 6px; background: #383838; display: flex; align-items: center; justify-content: space-between; padding: 0 12px 0 11px; }
.sl { height: 32px; flex: none; display: flex; align-items: center; padding-left: 2px; font-size: 11.5px; letter-spacing: -.15px; }
.blend + .sl { margin-top: 15px; }
.slbar { flex: none; width: 210px; height: 31px; background: #292929; border: 1px solid #242424; border-radius: 3px; padding-left: 3px; line-height: 28px; }
.slbar.full { background: #1e5aa3; border-color: #173a66; color: #e8eff8; }
.slval { flex: none; width: 30px; margin-left: 3px; }
.pmx { flex: none; width: 17px; text-align: center; font-size: 18px; font-weight: 600; line-height: 18px; color: #eee; }
.pmx.dim { color: #5d5d5d; }

/* right snap bar */
.snaps { padding: 5px 0 0 0; display: flex; flex-direction: column; gap: 14px; }
.sgrp { display: flex; flex-direction: column; }
.snap { width: 35px; height: 35px; display: flex; align-items: center; justify-content: center; border-radius: 6px; }
.snap svg { width: 20px; height: 20px; }
.snap.on { background: #212121; height: 34px; margin: .5px 0; }
.snap.off { opacity: .25; }

/* palette */
.palette { height: 40px; flex: none; padding-top: 5px; }
.swrow { display: flex; height: 19px; }
.swatches { width: 1882px; height: 19px; display: flex; }
.swatches i { flex: 1; display: block; }
.swatches .none { background: #fff; }
.swatches .none svg { width: 100%; height: 100%; }
.palarrow { width: 0; height: 0; margin: 11px 0 0 15px; border: 6px solid transparent; border-right: 6px solid #eee; border-left: 0; }
.palthumb { width: 425px; height: 8px; margin: 4px 0 0 4px; background: #a5a5a5; border-radius: 4px; }

/* status bar */
.status { height: 34px; flex: none; display: flex; align-items: center; font-size: 11.5px; letter-spacing: -.08px; color: #dcdcdc; }
.fs { width: 155px; display: grid; grid-template-columns: 73px 1fr; line-height: 17px; padding-left: 2px; }
.fsl.k { padding-left: 4px; }
.ol { width: 14px; }
.seye { width: 20px; height: 20px; margin-left: 22px; }
.slock { width: 20px; height: 20px; margin-left: 18px; }
.lcombo { width: 81px; height: 33px; margin-left: 7px; border: 1px solid #2a2a2a; border-radius: 6px; display: flex; align-items: center; justify-content: center; gap: 3px; font-size: 10.5px; font-weight: 600; letter-spacing: -.2px; }
.msg { flex: 1; margin-left: 2px; }
.xy { width: 60.5px; display: grid; grid-template-columns: 1fr auto; line-height: 17px; letter-spacing: -.2px; }
.xyv { text-align: right; }
.zl { margin-left: 11px; width: 12px; }
.status > .sw-d { margin-right: 11.5px; }
```
